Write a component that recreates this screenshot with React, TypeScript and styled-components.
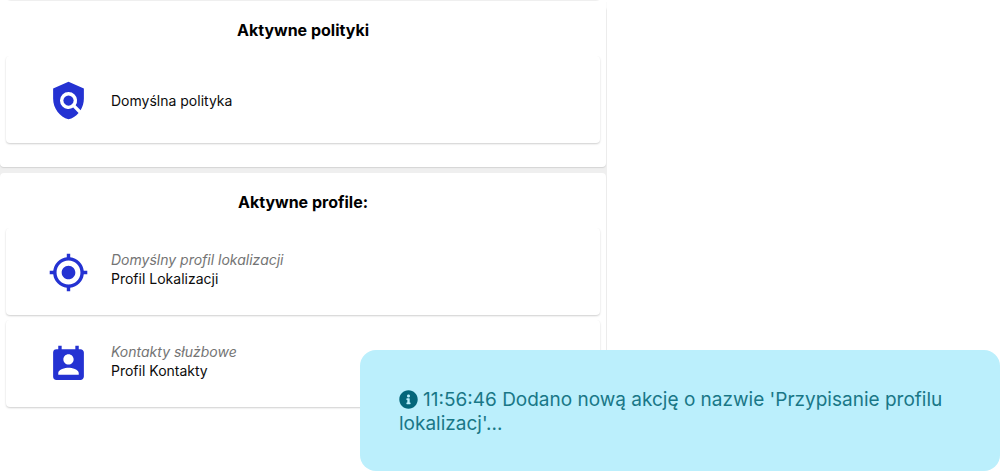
import React from 'react';
import styled, { createGlobalStyle } from 'styled-components';
import { MdPolicy, MdMyLocation, MdPermContactCalendar } from 'react-icons/md';
import { FaInfoCircle } from 'react-icons/fa';

const GlobalStyle = createGlobalStyle`
  * { box-sizing: border-box; }
  body {
    margin: 0;
    background: #fff;
    color: #0c0c0c;
    font-family: Inter, 'Liberation Sans', sans-serif;
    font-size: 14px;
    line-height: 19px;
  }
`;

const Column = styled.main`
  display: flex;
  flex-direction: column;
  gap: 6px;
  width: 61%;
  max-width: 607px;
  min-height: 100vh;
  padding: 1px 1px 0 0;
  border-radius: 12px 12px 0 0;
  background: #efefef;
`;

const Panel = styled.section<{ $grow?: boolean }>`
  flex: ${({ $grow }) => ($grow ? '1 0 auto' : 'none')};
  padding: 16px 6px 24px;
  border-radius: ${({ $grow }) => ($grow ? '4px 4px 0 0' : '0 0 4px 4px')};
  background: #fff;
  box-shadow: 0 1px 1px #d4d4d4;
`;

const Title = styled.h2`
  margin: 0 0 13px;
  font-size: 16px;
  font-weight: 700;
  line-height: 26px;
  text-align: center;
  color: #000;
`;

const List = styled.ul`
  display: flex;
  flex-direction: column;
  gap: 5px;
  margin: 0;
  padding: 0;
  list-style: none;
`;

const Card = styled.li`
  display: flex;
  align-items: center;
  gap: 22px;
  min-height: 87px;
  padding: 1px 42px 0;
  border-radius: 4px;
  background: #fff;
  box-shadow: 0 1px 2px #cfcfcf;
  clip-path: inset(0 -2px -3px -2px);

  svg {
    flex: none;
    color: #2432d2;
  }
`;

const Profile = styled.div`
  padding-bottom: 7px;
`;

const Kind = styled.em`
  display: block;
  color: #747474;
`;

const Toast = styled.div`
  position: fixed;
  right: 0;
  bottom: 0;
  width: 64%;
  min-height: 121px;
  padding: 38px 40px 34px 39px;
  border-radius: 16px;
  background: #bbeffc;
  color: #197787;
  font-size: 19px;
  font-weight: 400;
  line-height: 24px;

  svg {
    margin-right: 5px;
    color: #04667a;
    vertical-align: -3px;
  }
`;

export default function App() {
  return (
    <>
      <GlobalStyle />
      <Column>
        <Panel>
          <Title>Aktywne polityki</Title>
          <List>
            <Card>
              <MdPolicy size={41} aria-hidden />
              <div>Domyślna polityka</div>
            </Card>
          </List>
        </Panel>
        <Panel $grow>
          <Title>Aktywne profile:</Title>
          <List>
            <Card>
              <MdMyLocation size={41} aria-hidden />
              <Profile>
                <Kind>Domyślny profil lokalizacji</Kind>
                Profil Lokalizacji
              </Profile>
            </Card>
            <Card>
              <MdPermContactCalendar size={41} aria-hidden />
              <Profile>
                <Kind>Kontakty służbowe</Kind>
                Profil Kontakty
              </Profile>
            </Card>
          </List>
        </Panel>
      </Column>
      <Toast role="status">
        <FaInfoCircle size={19} aria-hidden />
        11:56:46 Dodano nową akcję o nazwie 'Przypisanie profilu lokalizacj'...
      </Toast>
    </>
  );
}
